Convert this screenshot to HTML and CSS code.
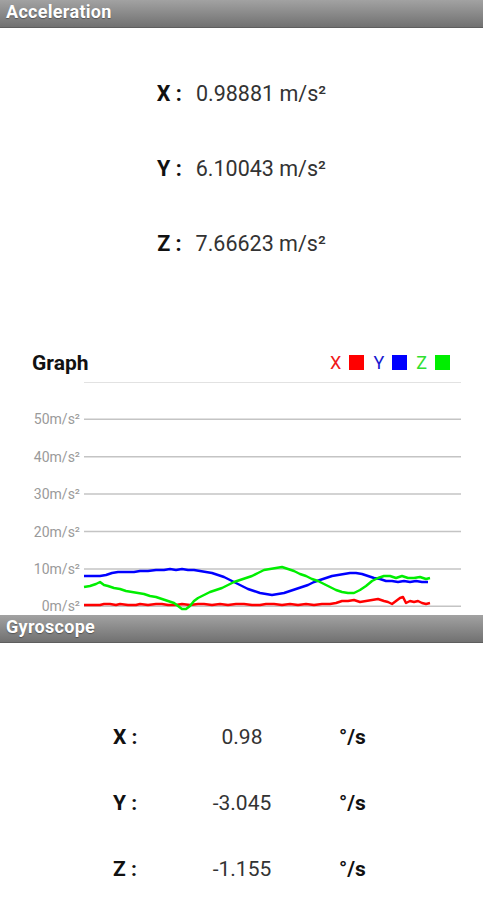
FILE: index.html
```html
<!DOCTYPE html>
<html lang="en">
<head>
  <meta charset="UTF-8">
  <meta name="viewport" content="width=device-width, initial-scale=1.0">
  <title>Sensors</title>
  <link rel="stylesheet" href="styles.css">
</head>
<body>
  <div class="section-bar">Acceleration</div>

  <div class="accel">
    <div class="accel-row"><span class="axis">X :</span>0.98881 m/s²</div>
    <div class="accel-row"><span class="axis">Y :</span>6.10043 m/s²</div>
    <div class="accel-row"><span class="axis">Z :</span>7.66623 m/s²</div>
  </div>

  <div class="graph">
    <div class="graph-head">
      <span class="graph-title">Graph</span>
      <div class="legend">
        <span class="legend-x">X</span><span class="swatch swatch-x"></span>
        <span class="legend-y">Y</span><span class="swatch swatch-y"></span>
        <span class="legend-z">Z</span><span class="swatch swatch-z"></span>
      </div>
    </div>
    <svg class="chart" width="483" height="233" viewBox="0 0 483 233">
      <line x1="84" y1="0.5" x2="461" y2="0.5" stroke="#e2e2e2" stroke-width="1"/>
      <g stroke="#c4c4c4" stroke-width="1.5">
        <line x1="84" y1="37.3" x2="461" y2="37.3"/>
        <line x1="84" y1="74.7" x2="461" y2="74.7"/>
        <line x1="84" y1="112.1" x2="461" y2="112.1"/>
        <line x1="84" y1="149.5" x2="461" y2="149.5"/>
        <line x1="84" y1="186.9" x2="461" y2="186.9"/>
        <line x1="84" y1="224.3" x2="461" y2="224.3"/>
      </g>
      <g class="axis-label" text-anchor="end">
        <text x="80" y="42">50m/s²</text>
        <text x="80" y="79.5">40m/s²</text>
        <text x="80" y="117">30m/s²</text>
        <text x="80" y="154.5">20m/s²</text>
        <text x="80" y="192">10m/s²</text>
        <text x="80" y="229">0m/s²</text>
      </g>
      <g fill="none" stroke-width="2.5" stroke-linejoin="round">
        <polyline stroke="#ff0000" points="84,223 92,223 100,223 104,222 110,222 116,223 120,222 128,223 136,223 140,222 148,223 156,222 162,222 168,223 176,223 182,222 190,223 198,222 204,222 212,223 220,222 228,223 236,222 244,222 252,223 260,223 266,222 274,222 282,223 290,222 298,223 306,222 314,223 322,222 330,222 336,221 342,219 348,219 354,218 360,220 366,219 372,218 378,217 384,219 388,220 392,222 396,219 400,216 403,215 406,221 410,219 414,220 418,219 422,221 426,222 430,221"/>
        <polyline stroke="#0000ff" points="84,194 92,194 100,194 106,193 112,191 118,190 126,190 134,190 140,189 148,189 156,188 164,188 170,187 176,188 182,187 188,188 194,188 200,189 206,190 212,191 218,193 224,195 230,198 236,201 242,204 248,207 254,209 260,211 266,212 272,213 278,212 284,211 290,209 296,207 302,205 308,203 314,200 320,198 326,196 332,194 338,193 344,192 350,191 356,191 362,192 368,194 374,196 380,197 386,199 392,199 398,200 404,199 410,200 416,199 422,200 428,200"/>
        <polyline stroke="#00ee00" points="84,205 90,204 96,202 100,200 104,203 108,204 114,206 120,207 126,209 132,210 138,211 144,212 150,214 156,215 162,217 168,219 174,221 178,224 182,227 186,227 190,224 194,219 198,216 204,213 210,210 216,208 222,206 228,203 234,200 240,198 246,196 252,194 258,191 264,188 270,187 276,186 282,185 288,187 294,189 300,192 306,194 312,197 318,199 324,202 330,205 336,208 342,210 348,211 354,211 360,208 366,204 372,199 378,196 384,194 390,194 396,196 402,194 408,196 414,196 420,195 426,197 430,196"/>
      </g>
    </svg>
  </div>

  <div class="section-bar">Gyroscope</div>

  <div class="gyro">
    <div class="gyro-row"><span class="axis">X :</span><span class="gyro-value">0.98</span><span></span><span class="unit">°/s</span></div>
    <div class="gyro-row"><span class="axis">Y :</span><span class="gyro-value">-3.045</span><span></span><span class="unit">°/s</span></div>
    <div class="gyro-row"><span class="axis">Z :</span><span class="gyro-value">-1.155</span><span></span><span class="unit">°/s</span></div>
  </div>
</body>
</html>
```

FILE: styles.css
```css
body {
  font-family: Roboto, "Noto Sans", Arial, sans-serif;
  margin: 0;
  padding: 0;
  background-color: white;
  color: #333;
}
.section-bar {
  height: 27px;
  line-height: 24px;
  padding-left: 6px;
  font-size: 18px;
  letter-spacing: 0.3px;
  font-weight: bold;
  color: white;
  text-shadow: 0 1px 1px rgba(0, 0, 0, 0.35);
  background: linear-gradient(#a2a2a2, #717171);
  border-bottom: 1px solid #5e5e5e;
}
.accel {
  padding-top: 28px;
}
.accel-row {
  height: 75px;
  display: flex;
  align-items: center;
  justify-content: center;
  font-size: 21.5px;
  color: #333;
}
.axis {
  font-weight: bold;
  color: #111;
}
.accel-row .axis {
  margin-right: 14px;
}
.graph {
  margin-top: 62px;
}
.graph-head {
  height: 39px;
  display: flex;
  align-items: center;
  justify-content: space-between;
  padding: 0 33px 0 32px;
}
.graph-title {
  font-size: 21px;
  font-weight: bold;
  color: #111;
}
.legend {
  display: flex;
  align-items: center;
  font-size: 18px;
}
.swatch {
  width: 15px;
  height: 15px;
  margin: 0 9px 0 8px;
}
.swatch-z {
  margin-right: 0;
}
.legend-x {
  color: #f01818;
}
.legend-y {
  color: #1a1ad0;
}
.legend-z {
  color: #30e030;
}
.swatch-x {
  background-color: #ff0000;
}
.swatch-y {
  background-color: #0000ff;
}
.swatch-z {
  background-color: #00ee00;
}
.chart {
  display: block;
}
.axis-label {
  font-size: 14px;
  fill: #9a9a9a;
}
.gyro {
  padding-top: 61px;
}
.gyro-row {
  height: 66px;
  display: grid;
  grid-template-columns: 80px 98px 48px auto;
  align-items: center;
  padding-left: 113px;
  font-size: 21px;
}
.gyro-value {
  text-align: center;
  color: #333;
}
.unit {
  font-weight: bold;
  color: #111;
}
```
